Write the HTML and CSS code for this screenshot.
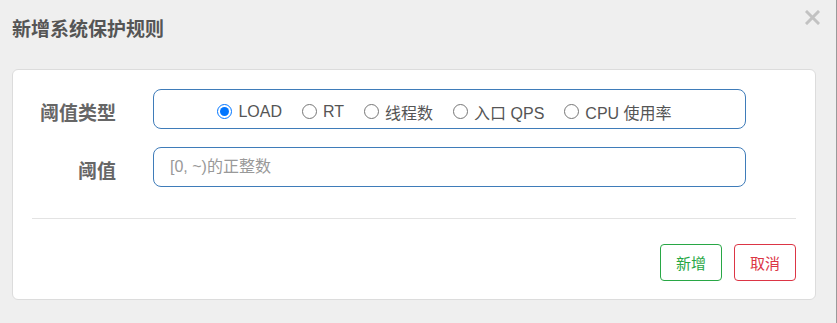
FILE: index.html
```html
<!DOCTYPE html>
<html lang="zh-CN">
<head>
<meta charset="utf-8">
<title>新增系统保护规则</title>
<link rel="stylesheet" href="styles.css">
</head>
<body>
<div class="page">
  <div class="modal-header">
    <h4 class="modal-title">新增系统保护规则</h4>
    <button class="close" type="button" aria-label="关闭">
      <svg width="15" height="15" viewBox="0 0 15 15"><path d="M2 2 L13 13 M13 2 L2 13" stroke="#c2c2c2" stroke-width="3" stroke-linecap="square"/></svg>
    </button>
  </div>
  <div class="modal-body">
    <div class="card">
      <form class="form">
        <div class="form-row">
          <label class="form-label">阈值类型</label>
          <div class="control radio-group">
            <label class="radio"><input type="radio" name="type" checked><span>LOAD</span></label>
            <label class="radio"><input type="radio" name="type"><span>RT</span></label>
            <label class="radio"><input type="radio" name="type"><span>线程数</span></label>
            <label class="radio"><input type="radio" name="type"><span>入口 QPS</span></label>
            <label class="radio"><input type="radio" name="type"><span>CPU 使用率</span></label>
          </div>
        </div>
        <div class="form-row">
          <label class="form-label">阈值</label>
          <input class="control text-input" type="text" placeholder="[0, ~)的正整数">
        </div>
      </form>
      <div class="divider"></div>
      <div class="actions">
        <button class="btn btn-add" type="button">新增</button>
        <button class="btn btn-cancel" type="button">取消</button>
      </div>
    </div>
  </div>
</div>
</body>
</html>
```

FILE: styles.css
```css
* { box-sizing: border-box; }
html, body { margin: 0; padding: 0; }
body {
  background: #efefef;
  font-family: "Liberation Sans", "Noto Sans CJK SC", sans-serif;
  color: #555;
}
.page {
  width: 837px;
  height: 323px;
  border-right: 1px solid #9a9a9a;
  overflow: hidden;
}
.modal-header {
  height: 60px;
  display: flex;
  justify-content: space-between;
  align-items: center;
  padding: 0 16px 0 12px;
}
.modal-title {
  margin: 0;
  font-size: 19px;
  font-weight: bold;
  line-height: 26px;
  color: #555;
}
.close {
  align-self: flex-start;
  margin-top: 10px;
  padding: 0;
  border: 0;
  background: none;
  width: 15px;
  height: 15px;
  display: block;
}
.close svg { display: block; }
.modal-body {
  padding: 9px 20px 0 12px;
}
.card {
  background: #fff;
  border: 1px solid #dcdcdc;
  border-radius: 6px;
  padding: 19px 19px 18px;
}
.form {
  display: grid;
  row-gap: 18px;
}
.form-row {
  display: grid;
  grid-template-columns: 84px 593px;
  column-gap: 37px;
  align-items: center;
}
.form-label {
  text-align: right;
  font-size: 19px;
  font-weight: bold;
  color: #666;
  padding-top: 4px;
}
.control {
  height: 40px;
  border: 1px solid #3f7cb9;
  border-radius: 8px;
  background: #fff;
}
.radio-group {
  display: flex;
  justify-content: center;
  align-items: center;
  gap: 20px;
  padding: 5px 10px 0 0;
  font-size: 16px;
  color: #555;
}
.radio {
  display: flex;
  align-items: center;
  gap: 6px;
}
.radio input {
  margin: 0;
  width: 15px;
  height: 15px;
}
.text-input {
  width: 100%;
  padding: 0 16px;
  font-family: inherit;
  font-size: 16px;
  color: #555;
  outline: none;
}
.text-input::placeholder { color: #999; }
.divider {
  height: 1px;
  background: #e3e3e3;
  margin-top: 31px;
}
.actions {
  display: flex;
  justify-content: flex-end;
  gap: 12px;
  margin-top: 25px;
}
.btn {
  width: 62px;
  height: 37px;
  background: #fff;
  border-radius: 4px;
  font-family: inherit;
  font-size: 15px;
  padding: 0;
}
.btn-add { border: 1px solid #28a745; color: #28a745; }
.btn-cancel { border: 1px solid #dc3545; color: #dc3545; }
```
